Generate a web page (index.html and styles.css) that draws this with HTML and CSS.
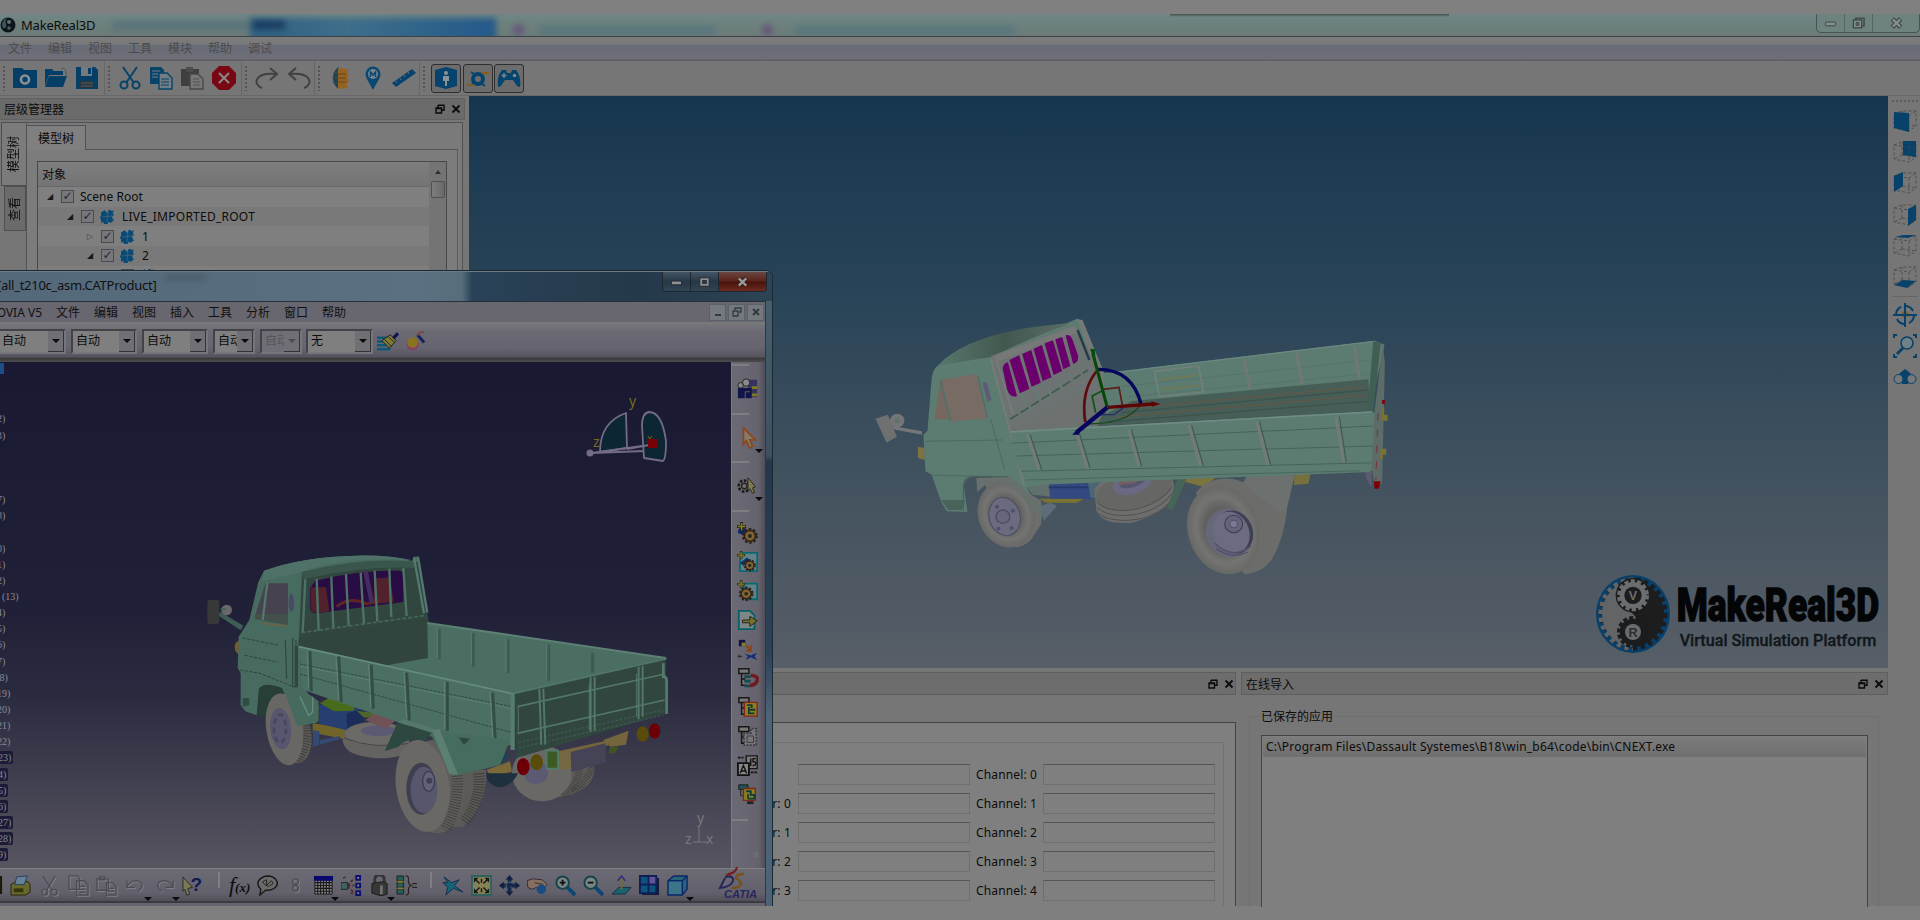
FILE: index.html
```html
<!DOCTYPE html>
<html lang="zh-CN">
<head>
<meta charset="utf-8">
<title>MakeReal3D</title>
<link rel="stylesheet" href="styles.css">
</head>
<body>
<svg class="defs" aria-hidden="true">
  <defs>
    <linearGradient id="sky" x1="0" y1="0" x2="0" y2="1"><stop offset="0" stop-color="#16364f"/><stop offset=".35" stop-color="#294458"/><stop offset=".7" stop-color="#44535f"/><stop offset="1" stop-color="#575e67"/></linearGradient>
    <linearGradient id="night" x1="0" y1="0" x2="0" y2="1"><stop offset="0" stop-color="#191933"/><stop offset=".5" stop-color="#202038"/><stop offset=".66" stop-color="#2b2b40"/><stop offset="1" stop-color="#575560"/></linearGradient>
    <radialGradient id="tyre"><stop offset=".5" stop-color="#60605f"/><stop offset=".75" stop-color="#747473"/><stop offset="1" stop-color="#686867"/></radialGradient>
    <linearGradient id="roof" x1="0" y1="0" x2="1" y2="0"><stop offset="0" stop-color="#57766c"/><stop offset=".5" stop-color="#42584f"/><stop offset="1" stop-color="#5c6c67"/></linearGradient>
    <symbol id="float" viewBox="0 0 10 10"><path d="M3 1.2h6v5H7M3 1v2.5M1 4h5.5v5H1zM1 4.6h5.5" fill="none" stroke="#0a0a0a" stroke-width="1.4"/></symbol>
    <symbol id="cross" viewBox="0 0 10 10"><path d="M1.5 1.5l7 7m0-7l-7 7" stroke="#0a0a0a" stroke-width="1.8"/></symbol>
    <symbol id="cube" viewBox="0 0 24 24"><path d="M1 5l8-3h14v15l-7 5-15-3zM1 5l15 2 7-5M16 7v15M9 2v13M9 15l-8 4M9 15l14 2" fill="none" stroke="#505050" stroke-width="1" stroke-dasharray="3 2"/></symbol>
    <symbol id="part" viewBox="0 0 14 14"><path d="M1 3l2-1 1-1 2 2 1 1 1-3 2 0 1 1 2-1-1 3 1 2-2 1 1 2 1 2-2 1-1 1-2-1-1 2-2 0-1 1-1-3-2 1 0-3-1-2 1-2z" fill="#084a77"/><path d="M2 7.500l10-1M7.500 2l-1 10" stroke="#4a6272" stroke-width=".8"/></symbol>
    <symbol id="gear" viewBox="0 0 24 24"><circle cx="13" cy="14" r="6.5" fill="none" stroke="#2c2520" stroke-width="3" stroke-dasharray="2.5 1.6"/><circle cx="13" cy="14" r="5.500" fill="#7c6530" stroke="#351f15" stroke-width="1.500"/><circle cx="13" cy="14" r="2" fill="#252525"/></symbol>
    <symbol id="spark" viewBox="0 0 10 10"><path d="M5 0v10M0 5h10" stroke="#24240c" stroke-width="3"/><path d="M5 1v8M1 5h8" stroke="#858025" stroke-width="1.6"/></symbol>
    <symbol id="treeic" viewBox="0 0 24 24"><path d="M2 2h11v5H2zM5 7v13h4M5 13h4" fill="#777" stroke="#171717" stroke-width="1.6"/></symbol>
  </defs>
</svg>

<div class="screen">
  <div class="top-strip"></div>

  <header class="titlebar">
    <svg class="app-icon" viewBox="0 0 16 16"><circle cx="8" cy="8" r="7.5" fill="#0b161c"/><path d="M7 1a7 7 0 0 0-4 10c2 1 4-1 3-4s0-4 1-6z" fill="#3f555e"/><circle cx="9" cy="5" r="2" fill="#5f6d70"/><circle cx="9" cy="11" r="1.8" fill="#4c5a5f"/></svg>
    <span class="app-name">MakeReal3D</span>
    <div class="glass"><i class="haze haze-text"></i><i class="haze haze-blue"></i><i class="haze haze-dark"></i><i class="haze haze-p1"></i><i class="haze haze-t1"></i><i class="haze haze-p2"></i><i class="haze haze-t2"></i><i class="shade"></i></div>
    <div class="win-btns">
      <span class="wb"><svg viewBox="0 0 14 12"><rect x="1.5" y="5" width="11" height="4" rx="1" fill="#85908f" stroke="#3b4444"/></svg></span>
      <span class="wb"><svg viewBox="0 0 14 12"><path d="M4 3V.8h9V9h-2" fill="none" stroke="#3b4444" stroke-width="1.4"/><rect x="1.5" y="2.8" width="9" height="8.4" fill="#85908f" stroke="#3b4444" stroke-width="1.4"/><rect x="4.5" y="5.5" width="3" height="3" fill="#657371" stroke="#3b4444"/></svg></span>
      <span class="wb wb-close"><svg viewBox="0 0 14 12"><path d="M2.500 1.500l9 9m0-9l-9 9" stroke="#3b4444" stroke-width="5"/><path d="M3 2l8 8m0-8l-8 8" stroke="#858e8d" stroke-width="2.600"/></svg></span>
    </div>
  </header>

  <nav class="menubar"><span>文件</span><span>编辑</span><span>视图</span><span>工具</span><span>模块</span><span>帮助</span><span>调试</span></nav>

  <div class="toolbar">
    <div class="tgroup g1">
      <svg viewBox="0 0 24 24"><path d="M0 2h9l2 2h13v18H0z" fill="#053f68"/><circle cx="12" cy="13.500" r="4" fill="none" stroke="#8a8f92" stroke-width="2.600"/></svg>
      <svg viewBox="0 0 24 24"><path d="M1 20V3h7l2 2h9v4H5z" fill="#053f68"/><path d="M5 10h18l-4 11H1z" fill="#053f68"/><path d="M17 3c4-2 5 1 5 6" fill="none" stroke="#3f5666"/></svg>
      <svg viewBox="0 0 24 24"><path d="M1 1h19l3 3v19H1z" fill="#053f68"/><path d="M6 1h11v9H6z" fill="#727b80"/><path d="M13 2h3v6h-3z" fill="#053f68"/><path d="M5 15h14v7H5z" fill="#27343c"/><path d="M6 17h12M6 20h12" stroke="#566069"/></svg>
    </div>
    <div class="tgroup g2">
      <svg viewBox="0 0 24 24" fill="none" stroke="#084369" stroke-width="2"><path d="M5 1l11 16M19 1L8 17"/><circle cx="6" cy="19" r="3.500"/><circle cx="18" cy="19" r="3.500"/></svg>
      <svg viewBox="0 0 24 24"><path d="M1 1h11l3 3v14H1z" fill="#084369"/><path d="M3 5h8M3 8h8M3 11h6" stroke="#747f87"/><path d="M10 7h8l5 5v11H10z" fill="#737d84" stroke="#084369" stroke-width="1.400"/><path d="M12 13h8M12 16h8M12 19h8" stroke="#084369"/></svg>
      <svg viewBox="0 0 24 24"><path d="M1 3h18v17H1z" fill="#3f3f3f"/><path d="M6 1h7v5H6z" fill="#4d4d4d"/><path d="M10 8h8l5 5v10H10z" fill="#777" stroke="#484848" stroke-width="1.400"/><path d="M13 13h6M13 16h7M13 19h7" stroke="#555"/></svg>
      <svg viewBox="0 0 24 24"><path d="M7 0h10l7 7v10l-7 7H7l-7-7V7z" fill="#780914"/><path d="M7 7l10 10m0-10L7 17" stroke="#898989" stroke-width="2"/></svg>
    </div>
    <div class="tgroup g3">
      <svg viewBox="0 0 24 24" fill="none" stroke="#414141" stroke-width="2"><path d="M7 22C-3 18 0 6 21 8M15 2l7 6-7 6"/></svg>
      <svg viewBox="0 0 24 24" fill="none" stroke="#414141" stroke-width="2"><path d="M17 22C27 18 24 6 3 8M9 2L2 8l7 6"/></svg>
    </div>
    <div class="tgroup g4">
      <svg viewBox="0 0 24 24"><path d="M9 1c-8 4-8 18 0 22z" fill="#154561"/><path d="M8 2l10 1-1 4 2 2-2 3 2 3-2 3 1 4-10 1z" fill="#946322"/><path d="M8 8h8M8 12h8M8 16h8M3 7h5M2 12h6M3 17h5" stroke="#644719"/></svg>
      <svg viewBox="0 0 24 24"><path d="M12 24C8 16 4.500 12 4.500 8a7.500 7.500 0 0 1 15 0c0 4-3.500 8-7.500 16z" fill="#084873"/><circle cx="12" cy="8" r="5" fill="#79858b"/><path d="M9.500 11V6l2.500 3 2.500-3v5" fill="none" stroke="#084873" stroke-width="1.500"/></svg>
      <svg viewBox="0 0 24 24"><path d="M0 17L20 3l4 4L4 21z" fill="#07446d"/><path d="M4 15l1 2m3-5l1 2m3-5l1 2m3-5l1 2" stroke="#62717b"/></svg>
    </div>
    <div class="tgroup g5">
      <span class="pressed"><svg viewBox="0 0 24 24"><path d="M1 4l11-3 11 3v16l-11 3-11-3z" fill="#07446d"/><circle cx="12" cy="7" r="2" fill="#8b9398"/><path d="M9 10h6v5h-2v5h-2v-5H9z" fill="#8b9398"/></svg></span>
      <span class="pressed"><svg viewBox="0 0 24 24"><circle cx="12" cy="13" r="5" fill="none" stroke="#07446d" stroke-width="4"/><path d="M5 6l3 2M19 20l-3-2M5 19l3-2" stroke="#07446d" stroke-width="2"/><path d="M16 7h7M1 19h7" stroke="#8a5b1e" stroke-width="2"/></svg></span>
      <span class="pressed"><svg viewBox="0 0 24 24"><path d="M5 4h4l1 3h4l1-3h4c4 5 5 11 4 17-4 0-5-5-7-7H8c-2 2-3 7-7 7C0 14 1 9 5 4z" fill="#07446d"/><path d="M7 7v5M4.500 9.500h5" stroke="#7d868c" stroke-width="1.500"/><circle cx="17.500" cy="9.500" r="1.800" fill="#7d868c"/></svg></span>
    </div>
  </div>

  <div class="workspace">
    <aside class="dock">
      <div class="dock-head"><span>层级管理器</span><svg class="hi"><use href="#float"/></svg><svg class="hi"><use href="#cross"/></svg></div>
      <div class="dock-body">
        <div class="vtabs"><span class="vtab on">模型树</span><span class="vtab">查看</span></div>
        <div class="tabpage">
          <div class="htab-row"><span class="htab">模型树</span><span class="htab-rest"></span></div>
          <div class="page">
            <div class="tree">
              <div class="tree-main">
                <div class="tree-head">对象</div>
                <div class="row r0"><i class="exp">◢</i><i class="chk">✓</i><span>Scene Root</span></div>
                <div class="row r1 alt"><i class="exp">◢</i><i class="chk">✓</i><svg class="pi"><use href="#part"/></svg><span class="wide">LIVE_IMPORTED_ROOT</span></div>
                <div class="row r2"><i class="exp dim">▷</i><i class="chk">✓</i><svg class="pi"><use href="#part"/></svg><span>1</span></div>
                <div class="row r2 alt"><i class="exp">◢</i><i class="chk">✓</i><svg class="pi"><use href="#part"/></svg><span>2</span></div>
                <div class="row r3"><i class="exp"></i><i class="chk"></i><svg class="pi"><use href="#part"/></svg></div>
              </div>
              <div class="scroll"><i class="up"></i><i class="thumb"></i></div>
            </div>
          </div>
        </div>
      </div>
    </aside>

    <main class="center">
      <svg class="view3d" viewBox="0 0 1419 572">
        <rect width="1419" height="572" fill="url(#sky)"/>
        <g transform="translate(391 204) scale(.3444 .3333)">
          <!-- mirror -->
          <path d="M95 378l85 16v10l-85-16z" fill="#74777a"/><path d="M45 356l36-12 26 66-30 18z" fill="#6f7171"/><circle cx="108" cy="362" r="21" fill="#747676"/><circle cx="108" cy="362" r="8" fill="#5f7272"/>
          <path d="M168 440l20 4v36l-20-6z" fill="#7c7340"/>
          <!-- spare wheel and chassis -->
          <path d="M520 596h130l-20 12h-90z" fill="#7a7330"/><path d="M470 540h90v50l-60-6z" fill="#61706d"/><path d="M548 548l120-6 30-12v66H552z" fill="#33497f"/><path d="M548 562h120" stroke="#24386b" stroke-width="5"/><path d="M608 520h70l-10 18h-58z" fill="#4f7023"/><path d="M660 540l30-20v74h-20z" fill="#4c6773"/>
          <path d="M680 570Q700 520 800 512Q910 500 912 560L905 590Q890 640 790 668Q700 676 686 630Z" fill="#6d6d6c"/><ellipse cx="795" cy="572" rx="114" ry="54" fill="#666665" transform="rotate(-14 795 572)"/><path d="M688 606c40 46 170 30 218-46M688 622c40 42 170 30 216-40M692 640c40 34 150 30 206-30" fill="none" stroke="#535353" stroke-width="3"/>
          <ellipse cx="790" cy="550" rx="58" ry="32" fill="#696984" transform="rotate(-16 790 550)"/><ellipse cx="790" cy="544" rx="40" ry="18" fill="#55556c" transform="rotate(-16 790 544)"/><path d="M690 512h220v12l-60 4-150-2z" fill="#626a68"/><path d="M760 522l60-2-20 30-50 6z" fill="#765d63"/>
          <path d="M915 518h140l-60 42-70-20z" fill="#7b743c"/><path d="M925 528l28-4-44 106-18-4z" fill="#476459"/>
          <!-- wheels -->
          <path d="M975 580c30-50 110-60 160-20l105 70q-10 90-45 150-30 40-80 42z" fill="#6c6c6a"/>
          <ellipse cx="1055" cy="690" rx="103" ry="135" fill="url(#tyre)" transform="rotate(-16 1055 690)"/>
          <ellipse cx="1073" cy="698" rx="68" ry="74" fill="#67677a" transform="rotate(-20 1073 698)"/><ellipse cx="1086" cy="696" rx="54" ry="66" fill="#3f3f52" transform="rotate(-20 1086 696)"/><ellipse cx="1078" cy="698" rx="52" ry="64" fill="#6b6b82" transform="rotate(-20 1078 698)"/><path d="M1030 730q50 50 104 10M1034 746q46 34 92 10" fill="none" stroke="#50506a" stroke-width="4"/><circle cx="1085" cy="672" r="26" fill="#64647c" stroke="#3c3c51" stroke-width="3"/><circle cx="1085" cy="672" r="11" fill="#7a7a92" stroke="#50506a" stroke-width="3"/>
          <path d="M1130 515h135l-28 122-30-8-95-80z" fill="#6c716f"/><path d="M1262 515h48l-8 36-42 4z" fill="#76703f"/>
          <path d="M360 548l70-6 96 60v70l-30 48q-20 20-44 22z" fill="#6e6e6d"/><ellipse cx="425" cy="644" rx="82" ry="100" fill="url(#tyre)" transform="rotate(-18 425 644)"/><ellipse cx="420" cy="650" rx="45" ry="58" fill="#6b6b80" stroke="#4c4c60" stroke-width="3" transform="rotate(-14 420 650)"/><circle cx="415" cy="650" r="20" fill="#66667d" stroke="#4c4c60" stroke-width="4"/><circle cx="398" cy="620" r="6" fill="#50506a"/><circle cx="444" cy="632" r="6" fill="#50506a"/><circle cx="402" cy="686" r="6" fill="#50506a"/><circle cx="440" cy="684" r="6" fill="#50506a"/>
          <path d="M522 618l30-10 20 10-38 44z" fill="#5d6c79"/>
          <!-- cab -->
          <path d="M208 235Q212 205 232 192Q300 110 600 70L630 56 646 62 724 254 684 400 470 440 530 556 484 560 520 640 440 548 380 530 322 532Q302 540 302 562L312 636 252 634 236 606 208 524 190 514 184 404 196 392Z" fill="#5c7b71"/>
          <path d="M338 534l100-4 90 90v40L440 552l-66-6-34 30z" fill="#66706c"/>
          <path d="M228 196Q320 90 612 70Q500 110 385 170Z" fill="url(#roof)"/>
          <path d="M380 168L625 76l100 190-50 110-240 20z" fill="#6d7372"/><path d="M392 166L625 78l4 20L402 184z" fill="#767978"/>
          <path d="M630 58l16 2 92 236-10 30z" fill="#747876"/><path d="M632 90l34 90" stroke="#243c49" stroke-width="7"/>
          <path d="M380 176l96 380M394 172l50 170" fill="none" stroke="#747c79" stroke-width="6"/>
          <g fill="#6a006c"><path d="M414 204q6-18 16-16l26 100q-22 8-30-24z"/><path d="M434 180l28-14 30 100-28 14z"/><path d="M471 162l26-12 28 98-27 12z"/><path d="M504 146l24-11 28 97-26 11z"/><path d="M536 130l24-9 27 92-25 12z"/><path d="M567 118l20-7 24 87-21 10z"/><path d="M597 106q12-4 19 10l17 50q4 20-14 26z"/></g>
          <path d="M436 358L662 210" stroke="#3b5d4d" stroke-width="5" stroke-dasharray="28 8"/><path d="M470 282l14 34m22-50l16 34m18-48l16 32m18-50l16 34m18-48l16 32" stroke="#637e75" stroke-width="4"/>
          <path d="M216 358l18-118 24 118z" fill="#77685f"/><path d="M234 240l104-18 30 134-106 8z" fill="#786b63"/><path d="M234 240l28 122M342 226l28 128" stroke="#507068" stroke-width="5"/>
          <path d="M356 248l12-2 14 54-12 6z" fill="#5d5b76"/><path d="M190 424l225-4M210 526l210 4M380 360l40 150" fill="none" stroke="#4c6b61" stroke-width="3"/>
          <path d="M300 632v-70q0-32 30-32h100" fill="none" stroke="#445f57" stroke-width="3"/><path d="M236 600h70l-10 30h-40z" fill="#48645a"/>
          <!-- cargo bed -->
          <path d="M706 220L1495 122l28 12-38 180-770 60z" fill="#5c7b71"/>
          <path d="M640 380L790 303 1476 238l6 96z" fill="#465e57"/><path d="M434 394L640 268 716 310 690 378z" fill="#6d7271"/>
          <path d="M780 325L1465 260M740 352L1465 286" stroke="#6a5543" stroke-width="3"/><path d="M760 338L1475 270M720 366L1475 304" stroke="#3e524c" stroke-width="4"/>
          <path d="M745 217L1495 124" stroke="#6d8880" stroke-width="4"/><path d="M760 260L1480 180M780 290L1470 222" stroke="#52716a" stroke-width="2"/>
          <path d="M1490 124l22 4-22 210-16-8z" fill="#405e52"/>
          <path d="M436 394L1486 334l18 10 6 150-30 22L490 556 452 480z" fill="#5c7c72"/>
          <path d="M436 396L1486 336" stroke="#708c83" stroke-width="5"/><path d="M440 430L1490 378M455 468L1490 438M470 514L1500 488" stroke="#466359" stroke-width="3"/>
          <path d="M480 540L1450 512" stroke="#4a675d" stroke-width="3"/>
          <g stroke="#737b78" stroke-width="9"><path d="M486 404l34 106M628 396l32 108M780 388l30 112M955 376l34 122M1152 364l32 130M1382 350l22 138"/></g>
          <g stroke="#3f564f" stroke-width="3"><path d="M494 404l34 106M636 396l32 108M788 388l30 112M963 376l34 122M1160 364l32 130M1392 350l20 138"/></g>
          <path d="M1115 178l18 88M1268 160l16 92M1436 140l14 96" stroke="#727876" stroke-width="8"/>
          <path d="M855 214l128-16 14 78-128 14z" fill="none" stroke="#71807b" stroke-width="5"/><path d="M872 238l108-12M876 268l108-12" stroke="#77794b" stroke-width="4"/>
          <path d="M1494 334l24-204 6 60-8 360-20 14-10-60z" fill="#5d6c68"/><path d="M1504 340l-6 200" stroke="#76333a" stroke-width="3" stroke-dasharray="22 26"/>
          <path d="M1492 544h20l-6 22h-12z" fill="#7b0006"/><path d="M1516 300h8v12h-8z" fill="#850008"/><path d="M1514 322h8v22h10v18h-16zM1512 446h16v18h-10v12h-8z" fill="#7a7230"/><path d="M1466 516h20v46q-16-16-20-46z" fill="#5b5a72"/>
          <!-- manipulator -->
          <path d="M690 210Q640 270 654 366" fill="none" stroke="#5e0b0c" stroke-width="8"/><path d="M688 208Q790 206 816 312" fill="none" stroke="#06065c" stroke-width="10"/>
          <path d="M655 372Q780 372 816 312" fill="none" stroke="#164a19" stroke-width="4"/>
          <path d="M706 268l46-6 10 54" fill="none" stroke="#5d1d18" stroke-width="5"/><path d="M684 338l-10-50 34-18" fill="none" stroke="#0b5515" stroke-width="5"/><path d="M694 344h44l26-20" fill="none" stroke="#25256b" stroke-width="3"/>
          <path d="M718 322L676 160" stroke="#06480a" stroke-width="9"/><path d="M668 146l14 2 2 44z" fill="#064f0b"/>
          <path d="M720 322L850 312" stroke="#5c0608" stroke-width="10"/><path d="M846 304l26 8-24 8z" fill="#5c0608"/>
          <path d="M718 322L628 398" stroke="#06065c" stroke-width="13"/><path d="M636 384l-20 20 20 0z" fill="#06065c"/>
        </g>
        <g transform="translate(1091 454) scale(.3333)">
          <ellipse cx="219" cy="192" rx="111" ry="117" fill="#07406a"/>
          <ellipse cx="219" cy="192" rx="97" ry="103" fill="none" stroke="#1d1d1e" stroke-width="14" stroke-dasharray="13 11"/>
          <ellipse cx="219" cy="192" rx="93" ry="98" fill="#1d1d1e"/>
          <path d="M219 94A93 98 0 0 0 219 290Q270 240 219 192Q160 140 219 94z" fill="#626466"/><path d="M219 89A97 103 0 0 0 219 295" fill="none" stroke="#626466" stroke-width="14" stroke-dasharray="13 11"/>
          <circle cx="219" cy="136" r="52" fill="#1b1c1d"/><circle cx="219" cy="136" r="42" fill="none" stroke="#6b6d6f" stroke-width="12" stroke-dasharray="12 7"/><circle cx="219" cy="136" r="40" fill="#6b6d6f"/><circle cx="219" cy="136" r="26" fill="#1c1c1d"/><text x="219" y="150" class="gear-letter" fill="#6b6d6f">V</text>
          <circle cx="219" cy="246" r="43" fill="none" stroke="#1b1c1d" stroke-width="10" stroke-dasharray="12 7"/><circle cx="219" cy="246" r="40" fill="#1b1c1d"/><circle cx="219" cy="246" r="24" fill="#696b6d"/><text x="219" y="260" class="gear-letter" fill="#2c2d2e">R</text>
          <text x="350" y="213" class="brand" textLength="608" lengthAdjust="spacingAndGlyphs">MakeReal3D</text>
          <text x="359" y="289" class="brand-sub" textLength="590" lengthAdjust="spacingAndGlyphs">Virtual Simulation Platform</text>
        </g>
      </svg>

      <div class="bottom">
        <section class="bdock left">
          <div class="bhead"><span></span><svg class="hi"><use href="#float"/></svg><svg class="hi"><use href="#cross"/></svg></div>
          <div class="lpage"><div class="lgroup">
            <span class="lab"></span><i class="field"></i><span class="lab">Channel: 0</span><i class="field"></i>
            <span class="lab">r: 0</span><i class="field"></i><span class="lab">Channel: 1</span><i class="field"></i>
            <span class="lab">r: 1</span><i class="field"></i><span class="lab">Channel: 2</span><i class="field"></i>
            <span class="lab">r: 2</span><i class="field"></i><span class="lab">Channel: 3</span><i class="field"></i>
            <span class="lab">r: 3</span><i class="field"></i><span class="lab">Channel: 4</span><i class="field"></i>
          </div></div>
        </section>
        <section class="bdock right">
          <div class="bhead"><span>在线导入</span><svg class="hi"><use href="#float"/></svg><svg class="hi"><use href="#cross"/></svg></div>
          <div class="rgroup">
            <div class="legend"><span>已保存的应用</span></div>
            <div class="listbox"><div class="item">C:\Program Files\Dassault Systemes\B18\win_b64\code\bin\CNEXT.exe</div></div>
          </div>
        </section>
      </div>
    </main>

    <div class="side">
      <i class="grip"></i>
      <svg viewBox="0 0 24 24"><use href="#cube"/><path d="M1 3l15 1v19L1 19z" fill="#084169"/></svg>
      <svg viewBox="0 0 24 24"><use href="#cube"/><path d="M10 1h13v16l-13-2z" fill="#084169"/><path d="M16 3v11M12 7h10" stroke="#24465c"/></svg>
      <svg viewBox="0 0 24 24"><use href="#cube"/><path d="M1 5l9-4v14l-9 6z" fill="#084169"/></svg>
      <svg viewBox="0 0 24 24"><use href="#cube"/><path d="M15 6l8-4v15l-8 6z" fill="#084169"/></svg>
      <svg viewBox="0 0 24 24"><use href="#cube"/><path d="M2 3l8-2h13l-8 3z" fill="#084169"/></svg>
      <svg viewBox="0 0 24 24"><use href="#cube"/><path d="M1 20l9-5 13 1-9 7z" fill="#084169"/></svg>
      <i class="hr"></i>
      <svg viewBox="0 0 24 24"><path d="M7 12l5-5 5 5-5 3z" fill="#865921"/><path d="M12 0v24M0 12h24" stroke="#084169" stroke-width="2"/><circle cx="12" cy="12" r="9" fill="none" stroke="#084169" stroke-width="2" stroke-dasharray="10 4"/></svg>
      <svg viewBox="0 0 24 24"><circle cx="14" cy="9" r="6" fill="#728088" stroke="#084169" stroke-width="1.600"/><path d="M10 14l-6 6" stroke="#084169" stroke-width="3"/><path d="M1 4V1h3M20 1h3v3M1 20v3h3M20 23h3v-3" fill="none" stroke="#084169" stroke-width="2"/></svg>
      <svg viewBox="0 0 24 24"><path d="M8 6l4-3 4 3 3 3-4 9H9L5 9z" fill="#084169"/><circle cx="5.500" cy="13" r="4.500" fill="#75797c" stroke="#084169"/><circle cx="18.500" cy="13" r="4.500" fill="#75797c" stroke="#084169"/></svg>
    </div>
  </div>
  <div class="bottom-strip"></div>

  <section class="catia">
    <div class="ctitle"><span class="ctitle-text">[all_t210c_asm.CATProduct]</span><i class="haze smudge"></i>
      <div class="cbtns"><span><svg viewBox="0 0 14 12"><rect x="1.500" y="5" width="11" height="4" fill="#909090" stroke="#222b34"/></svg></span><span><svg viewBox="0 0 14 12"><rect x="2" y="1.500" width="10" height="9" fill="#909090" stroke="#222b34"/><rect x="5" y="4.500" width="4" height="3" fill="#303e4c" stroke="#222b34"/></svg></span><span class="red"><svg viewBox="0 0 14 12"><path d="M3 2l8 8m0-8l-8 8" stroke="#351815" stroke-width="4.500"/><path d="M3 2l8 8m0-8l-8 8" stroke="#999" stroke-width="2.600"/></svg></span></div>
    </div>
    <div class="cframe">
      <div class="cmenu"><span class="env">OVIA V5</span><span>文件</span><span>编辑</span><span>视图</span><span>插入</span><span>工具</span><span>分析</span><span>窗口</span><span>帮助</span>
        <div class="mdi"><i><svg viewBox="0 0 10 10"><path d="M2 8h6" stroke="#303a43" stroke-width="2"/></svg></i><i><svg viewBox="0 0 10 10"><path d="M3 3V1h6v4H7M1 4h5v5H1z" fill="none" stroke="#303a43" stroke-width="1.300"/></svg></i><i><svg viewBox="0 0 10 10"><path d="M2 2l6 6m0-6L2 8" stroke="#303a43" stroke-width="2"/></svg></i></div>
      </div>
      <div class="ccombos">
        <span class="combo first"><b>自动</b><i></i></span><span class="combo"><b>自动</b><i></i></span><span class="combo"><b>自动</b><i></i></span><span class="combo small"><b>自动</b><i></i></span><span class="combo small off"><b>自动</b><i></i></span><span class="combo none"><b>无</b><i></i></span>
        <svg class="ci" viewBox="0 0 24 22"><path d="M0 7h12M0 11h11M0 15h12M0 19h14" stroke="#0b5977" stroke-width="2.600"/><path d="M5 10l9-6 6 6-7 8z" fill="#7c7a33" stroke="#201f20"/><path d="M8 9l7 7M12 6l6 6" stroke="#252525"/><path d="M16 6l5-5 2 3-5 5z" fill="#111358"/></svg>
        <svg class="ci" viewBox="0 0 24 22"><circle cx="8" cy="14" r="6.500" fill="#854067"/><circle cx="8" cy="12" r="5.500" fill="#8a7420"/><path d="M13 4l7 8" stroke="#15225a" stroke-width="3"/><path d="M13 5c1-5 4-3 7-4" fill="none" stroke="#7d4545" stroke-width="2"/></svg>
      </div>
      <div class="cbody">
        <div class="cview">
          <svg viewBox="0 0 731 506">
            <rect width="731" height="506" fill="url(#night)"/>
            <g transform="translate(190 178) scale(.3333)">
              <path d="M90 215l70 42-8 14-66-44z" fill="#3f5d54"/><rect x="52" y="180" width="36" height="72" rx="8" fill="#373838"/><circle cx="110" cy="210" r="16" fill="#696969"/><path d="M92 208h16" stroke="#3e6756" stroke-width="6"/>
              <path d="M150 302v40q-16-2-16-22 0-16 16-18z" fill="#795c22"/>
              <!-- undercarriage -->
              <path d="M368 550l100 14v34l-100-20z" fill="#716429"/><path d="M388 495l66-8 64 24v40l-48 20-82-20z" fill="#273e70"/><path d="M470 520l52-14v40l-50 22z" fill="#1b2c58"/><path d="M390 490l26-16 80 16-4 22-60 2z" fill="#486c1c"/><path d="M370 570l18 4v40l-20 8zM390 600l60-12v10l-60 16z" fill="#354a73"/><path d="M500 512l60 8v14l-40-2z" fill="#4d642a"/>
              <path d="M458 596q0-46 90-50 90 0 110 44v50q-70 24-130 10-70-10-70-54z" fill="#656361"/><ellipse cx="558" cy="582" rx="92" ry="34" fill="#6c6a67"/><ellipse cx="565" cy="572" rx="52" ry="16" fill="#5b5974"/><path d="M462 594q90 36 196 16" fill="none" stroke="#474644" stroke-width="3"/><path d="M526 540l36-24 54 26-30 24z" fill="#705155"/>
              <!-- far rear wheel -->
              <path d="M1090 660l124 20q0 60-70 84l-70 14z" fill="#5c5a57"/><ellipse cx="1056" cy="700" rx="90" ry="84" fill="#696864"/><ellipse cx="1038" cy="698" rx="36" ry="34" fill="#5c5a73"/>
              <path d="M1120 770q44-30 52-98M1150 756q40-30 56-76" fill="none" stroke="#454443" stroke-width="22" stroke-dasharray="3 4"/>
              <!-- front wheel -->
              <ellipse cx="325" cy="596" rx="40" ry="74" fill="#5c5b59"/><path d="M346 524q24 66-24 144" fill="none" stroke="#403f3e" stroke-width="26" stroke-dasharray="3 5"/><ellipse cx="283" cy="566" rx="54" ry="111" fill="#696764" transform="rotate(-9 283 566)"/><ellipse cx="272" cy="566" rx="31" ry="62" fill="#57566e" transform="rotate(-6 272 566)"/><ellipse cx="270" cy="566" rx="18" ry="42" fill="none" stroke="#45455c" stroke-width="8" stroke-dasharray="16 12"/>
              <!-- cab -->
              <path d="M222 92Q340 50 500 47Q600 45 666 63L672 50 684 50 714 240 330 330 346 450 386 500 380 548 322 558 286 462Q250 425 208 444L200 526 166 514 152 496 152 400 143 384 146 290 178 240 205 126Z" fill="#486b60"/>
              <path d="M222 92Q340 50 500 47q100-2 166 14-200-14-336 36l-112 26z" fill="#4f7268"/><path d="M204 524L206 450Q216 422 276 444L284 462Q238 450 226 530Z" fill="#283f38"/>
              <path d="M226 130h68v112l-100-10z" fill="#46424e"/><path d="M196 222h98v34l-98-18z" fill="#44504b"/><path d="M216 250l76 8" stroke="#7c6136" stroke-width="3"/><path d="M232 128l-14 112" stroke="#54776d" stroke-width="7"/>
              <path d="M336 96Q520 58 690 66l26 186v110l-56 4-334-50z" fill="#31463f"/><path d="M336 96Q520 50 674 66l-2 18Q520 76 340 118z" fill="#3a564c"/>
              <path d="M376 122Q510 90 628 92q12 0 12 14v80L380 220q-20 0-20-20v-56z" fill="#2a0c44"/><path d="M362 142h46l10 72-42 4q-14 0-14-20zM552 116l46-4 14 74-60 6z" fill="#51222b"/><path d="M440 200q40-32 90-8l40-10" fill="none" stroke="#5e2524" stroke-width="9"/><path d="M526 92l20 96" stroke="#442c5f" stroke-width="14"/>
              <path d="M346 118l-8 160M380 116l6 156M424 110l6 154M468 102l8 156M512 98l10 154M554 92l8 152M598 86l6 146M640 84l10 144" stroke="#4d7367" stroke-width="7"/>
              <path d="M672 52l30 168M684 50l28 168" stroke="#54796e" stroke-width="7"/><path d="M334 278L710 226" stroke="#46675c" stroke-width="5" stroke-dasharray="12 6"/>
              <path d="M158 294l110 22M150 390l60 10 100 40M164 346l100 20" fill="none" stroke="#2e453e" stroke-width="3" stroke-dasharray="10 4"/><path d="M286 300l4 116M308 294v146h10V300" fill="none" stroke="#314b43" stroke-width="4"/>
              <ellipse cx="304" cy="188" rx="8" ry="28" fill="#4a4a67"/><path d="M158 474h20v22l-20 4z" fill="#314c43"/>
              <!-- bed interior -->
              <path d="M326 296L716 232v122l-100 20-60 30-230-82z" fill="#31453e"/>
              <path d="M712 248L1428 354 970 462 590 376l124-22z" fill="#4b6e62"/><path d="M712 249L1428 354" stroke="#5c8074" stroke-width="6"/>
              <path d="M748 266v92M850 280v100M954 298v102M1076 314v108M1208 338v60" stroke="#3d5b51" stroke-width="9"/><path d="M742 264v90M844 278v96M948 296v100M1070 314v104" stroke="#5a7d72" stroke-width="3"/>
              <!-- near side -->
              <path d="M326 318L972 460v152q-40 10-62 16L630 548l-290-98z" fill="#4c6f63"/>
              <path d="M326 320L972 462" stroke="#648b7e" stroke-width="5"/><path d="M330 372L966 500M330 402L966 578" stroke="#304b42" stroke-width="3" stroke-dasharray="9 3"/><path d="M330 378L966 506" stroke="#5b7e73" stroke-width="3"/>
              <path d="M360 334l4 120M446 350l8 136M544 374l6 132M650 398l8 144M772 426v146M908 458l8 140" stroke="#334e44" stroke-width="9"/><path d="M352 332l4 112M438 348l8 130M536 372l6 130M642 396l8 140M764 424v144M900 456l8 138" stroke="#618377" stroke-width="3"/>
              <path d="M326 440l60 44v60l-64 12-36-96z" fill="#466b5e"/><path d="M330 470l26 56 12-10V470" fill="none" stroke="#638c7d" stroke-width="4"/>
              <path d="M314 318h10v124h-10z" fill="#2f473f"/>
              <!-- tailgate -->
              <path d="M972 460L1428 356v164L980 654z" fill="#30463f"/><path d="M972 460L1430 356M982 500L1424 402M982 580L1424 480" stroke="#52776a" stroke-width="5"/><path d="M985 608L1420 510M985 624L1420 526" stroke="#4a6c60" stroke-width="2" stroke-dasharray="8 5"/>
              <path d="M1048 446l6 168M1060 446l6 168M1202 412v164M1214 410v162M1346 380v158M1358 378v152" stroke="#527669" stroke-width="6"/><path d="M968 464v166" stroke="#557c6e" stroke-width="13"/><path d="M1420 370v40q10 0 10 12v100" fill="none" stroke="#547c6e" stroke-width="8"/><path d="M985 500v75M1198 430v140M1340 400v130" stroke="#67897d" stroke-width="2"/>
              <!-- rear details -->
              <path d="M890 690l70-26 6 30-60 20z" fill="#7b6939"/><path d="M888 700h96q-18 40-60 42-36-10-36-42z" fill="#1d303c"/><path d="M900 622l60 22-26 30z" fill="#233f54"/>
              <path d="M1110 632l150-32v14l-150 40zM1240 600l76-28-8 42-46 6z" fill="#75653c"/><path d="M1110 638h36v50h-36z" fill="#756943"/><path d="M1142 636l104-26 2 56-104 30z" fill="#454457"/><path d="M1260 620h26l-10 20h-20z" fill="#405522"/><path d="M1070 632h34v54h-34z" fill="#3d5a24" stroke="#4f7c6b" stroke-width="5"/>
              <ellipse cx="1000" cy="680" rx="19" ry="26" fill="#6d0006"/><ellipse cx="1040" cy="667" rx="19" ry="24" fill="#594b0a"/><ellipse cx="1358" cy="582" rx="18" ry="23" fill="#594b0a"/><ellipse cx="1394" cy="573" rx="17" ry="23" fill="#6d0006"/>
              <!-- rear wheel -->
              <path d="M780 680l108 10q8 100-70 170h-60z" fill="#5b5a57"/><path d="M866 700q10 80-44 150" fill="none" stroke="#403f3e" stroke-width="34" stroke-dasharray="3 5"/><ellipse cx="735" cy="740" rx="87" ry="140" fill="#5e5d5a" transform="rotate(-5 735 740)"/><path d="M790 660q34 100-24 210" fill="none" stroke="#444342" stroke-width="34" stroke-dasharray="3 5"/><ellipse cx="698" cy="738" rx="80" ry="139" fill="#696864" transform="rotate(-8 698 738)"/>
              <ellipse cx="694" cy="746" rx="45" ry="78" fill="#403f52"/><ellipse cx="702" cy="750" rx="40" ry="70" fill="#57566d"/><ellipse cx="716" cy="724" rx="18" ry="30" fill="#626179" stroke="#3b3a50" stroke-width="4"/><circle cx="718" cy="722" r="9" fill="#3f3e56"/>
              <path d="M616 560L640 546 736 572 960 600 930 676 800 706 786 706 726 590 626 566Z" fill="#466c5f"/><path d="M584 634l38-86 106 26-20 28q-60-12-82 18z" fill="#2d4840"/><path d="M622 546l20-8 96 30-12 10z" fill="#54796c"/><path d="M726 572l22-6 56 138-26-2z" fill="#5b8072"/><path d="M806 592l34 4-18 18z" fill="#2d483f"/>
            </g>
            <!-- compass -->
            <g transform="translate(0 -204)"><g fill="#0d2633" stroke="#746b86" stroke-width="1.800" stroke-linejoin="round"><path d="M600 294q0-30 26-39l1 35-27 4zM642 268q0-13 7-14 13 0 17 29 0 18-3 20l-19-3z"/><path d="M592 295l50-7M592 295l52-2M627 291l22-4" fill="none"/></g><circle cx="590" cy="295" r="3.500" fill="#746b86"/><g class="axis yellow"><text x="629" y="248">y</text><text x="593" y="289">z</text><text x="647" y="284" class="tiny">x</text></g><rect x="648" y="281" width="9" height="9" fill="#780006"/></g>
            <g class="axis grey"><text x="697" y="461">y</text><text x="685" y="482">z</text><text x="706" y="482">x</text></g><path d="M699 464v16h8M699 480h-6" fill="none" stroke="#78777f"/>
          </svg>
          <ul class="ctree"><li><i class="sel"></i></li><li></li><li></li><li>2)</li><li>3)</li><li></li><li></li><li></li><li>7)</li><li>8)</li><li></li><li>0)</li><li>1)</li><li>2)</li><li>. (13)</li><li>4)</li><li>5)</li><li>6)</li><li>7)</li><li>.8)</li><li>19)</li><li>20)</li><li>21)</li><li>22)</li><li><b>23)</b></li><li><b>4)</b></li><li><b>5)</b></li><li><b>6)</b></li><li><b>27)</b></li><li><b>28)</b></li><li><b>9)</b></li></ul>
        </div>
        <div class="cside">
          <div class="cs lone"><svg viewBox="0 0 24 24"><path d="M12 2h10v19H12z" fill="#363260"/><path d="M16 9h6v3h-6zM16 17h6v3h-6z" fill="#817b20"/><path d="M1 11h15v11H1z" fill="#11154d"/><circle cx="4" cy="8" r="3" fill="#898989" stroke="#222"/><circle cx="10" cy="5" r="4" fill="#898989" stroke="#222"/><path d="M9 23V15h5" fill="none" stroke="#6d6b24"/></svg></div>
          <div class="cs lone drop"><svg viewBox="0 0 24 24"><path d="M7 1l13 13h-6l3 7-3 2-4-8-3 4z" fill="#857a70" stroke="#8c481b" stroke-width="2"/></svg></div>
          <div class="cs lone drop"><svg viewBox="0 0 24 24"><circle cx="8" cy="12" r="6" fill="#707070" stroke="#1e1e1e" stroke-width="3" stroke-dasharray="3 1.500"/><circle cx="8" cy="12" r="3" fill="none" stroke="#222" stroke-width="1.500"/><path d="M12 3l8 10-3 1 2 5-2 1-3-5-2 2z" fill="#7f7c50" stroke="#222"/></svg></div>
          <div class="cs stack">
            <svg viewBox="0 0 24 24"><path d="M1 12q0-6 6-7l4 4-5 5z" fill="#10266b"/><use href="#spark" x="0" y="0" width="10" height="10"/><use href="#gear" x="0" y="0" width="26" height="26"/></svg>
            <svg viewBox="0 0 24 24"><path d="M4 2h18v20H3z" fill="#648088" stroke="#086a70" stroke-width="2"/><path d="M3 13l8-6 4 4-8 5z" fill="#12316b"/><use href="#spark" x="0" y="0" width="9" height="9"/><use href="#gear" x="3" y="4" width="20" height="20"/></svg>
            <svg viewBox="0 0 24 24"><path d="M7 4h15v17H10z" fill="#648088" stroke="#086a70" stroke-width="2"/><use href="#gear" x="-3" y="1" width="24" height="24"/><use href="#spark" x="0" y="0" width="9" height="9"/></svg>
            <svg viewBox="0 0 24 24"><path d="M2 2h12l5 5v15H2z" fill="#7d8788" stroke="#076066" stroke-width="2"/><path d="M6 12h8V8l8 5-8 6v-4H6z" fill="#77712a" stroke="#1c1c1c"/></svg>
            <svg viewBox="0 0 24 24"><path d="M2 2h7v7H2z" fill="#141145"/><path d="M5 5h4v4H5z" fill="#807c32"/><path d="M10 8l4 5m1-5v6h-5" fill="none" stroke="#854516" stroke-width="2"/><path d="M8 17l7 2 7-3-3 4 3 4-7-3-6 3 3-4z" fill="#102a78"/><path d="M6 20H1m2-2l-2 2 2 2" fill="none" stroke="#202020"/></svg>
            <svg viewBox="0 0 24 24"><use href="#treeic"/><path d="M8 9h7v3H8zm0 5h7v3H8zm0 5h7v3H8z" fill="#164b4f"/><path d="M15 9q9 1 7 6t-8 5" fill="none" stroke="#701a22" stroke-width="4"/></svg>
            <svg viewBox="0 0 24 24"><use href="#treeic"/><path d="M8 7h14v15H8z" fill="#8b801c" stroke="#83251c" stroke-width="1.500"/><path d="M11 10h5v3M13 12v7h6M14 15h6" fill="none" stroke="#103b3c" stroke-width="2"/></svg>
            <svg viewBox="0 0 24 24"><use href="#treeic"/><path d="M7 9h8V4h6v18H8z" fill="#75757a" stroke="#3a3a3e" stroke-width="2" stroke-dasharray="2 1.500"/><path d="M11 12h7v7h-7z" fill="none" stroke="#3a3a3e"/></svg>
            <svg viewBox="0 0 24 24"><path d="M10 2h12v14H10z" fill="#777" stroke="#171717" stroke-width="1.500"/><path d="M1 10h12v13H1z" fill="#858585" stroke="#111" stroke-width="2"/><path d="M3.500 21L7 12.500 10.500 21M5 18.500h4M15 5v8M20.500 5H17.500v3.500q3.500-.5 3 2t-3.500 2" fill="none" stroke="#111" stroke-width="1.500"/><path d="M1 4h6M15 20h7" stroke="#111" stroke-width="2" stroke-dasharray="3 1"/></svg>
            <svg viewBox="0 0 24 24"><path d="M2 2h10v5H2z" fill="#19575c" stroke="#171717"/><path d="M4 7v7h4" fill="none" stroke="#222"/><path d="M7 6h13v13H7z" fill="#8b801c" stroke="#83251c" stroke-width="1.500"/><path d="M10 9h5v4h4v4h-7M12 12v5" fill="none" stroke="#103b3c" stroke-width="2"/><path d="M11 20h7v3h-7z" fill="#1e2424"/></svg>
          </div>
          <i class="cgrip"></i><span class="more">»</span>
        </div>
      </div>
      <div class="cbottom">
        <div class="cb b1">
          <span><svg viewBox="0 0 22 22"><path d="M2 2h18v17H2z" fill="#555011" stroke="#181807" stroke-width="2"/></svg></span>
          <span><svg viewBox="0 0 22 22"><path d="M1 10l5-3h13l2 3v8l-5 3H1z" fill="#68682a" stroke="#24240d"/><path d="M7 2l11-1-3 9H5z" fill="#658396" stroke="#273e62"/><path d="M4 14h10v4H4z" fill="#34350c"/></svg></span>
          <span class="gray"><svg viewBox="0 0 22 22"><path d="M4 1l10 15M17 1L8 16"/><circle cx="6" cy="18" r="3"/><circle cx="16" cy="18" r="3"/></svg></span>
          <span class="gray"><svg viewBox="0 0 22 22"><path d="M1 1h9l2 3v11H1zM9 6h8l4 4v11H9zM12 12h6M12 15h6M12 18h6"/></svg></span>
          <span class="gray"><svg viewBox="0 0 22 22"><path d="M1 4h12v12H1zM4 2h5v3H4zM11 8h6l4 4v9H11zM13 14h6M13 17h6"/></svg></span>
          <span class="gray d"><svg viewBox="0 0 22 22"><path d="M2 6v7h8M2 12C8 2 22 6 17 14l-3 3"/></svg></span>
          <span class="gray d"><svg viewBox="0 0 22 22"><path d="M20 6v7h-8M20 12C14 2 0 6 5 14l3 3"/></svg></span>
          <span><svg viewBox="0 0 22 22"><path d="M1 2l10 11-5 1 2 6-3 1-2-6-2 2z" fill="#7d7a53" stroke="#292929"/><text x="9" y="17" class="qm">?</text></svg></span>
        </div>
        <i class="vsep"></i>
        <div class="cb b2">
          <span class="fx">f<small>(x)</small></span>
          <span><svg viewBox="0 0 22 22"><path d="M4 15C-3 8 3 2 11 1c9 0 13 8 8 12-3 3-7 3-10 3l-6 5z" fill="#6b6b6b" stroke="#191919" stroke-width="1.500"/><path d="M6 7l4-2v6l5-5 2 3-5 3-4-2z" fill="none" stroke="#252525"/></svg></span>
          <span class="gray"><svg viewBox="0 0 22 22"><circle cx="11" cy="7" r="3"/><circle cx="11" cy="14" r="3"/></svg></span>
          <span class="d"><svg viewBox="0 0 22 22"><path d="M2 5h18v15H2z" fill="#878787" stroke="#191919"/><path d="M5 5v15M8 5v15M11 5v15M14 5v15M17 5v15M2 8h18M2 11h18M2 14h18M2 17h18" stroke="#1a1a1a" stroke-width="1.200"/><path d="M1 1h20v5H1z" fill="#08086e"/></svg></span>
          <span><svg viewBox="0 0 22 22"><path d="M0 8h7v7H0z" fill="#3d6663" stroke="#242424"/><path d="M7 11l7-8M7 11h7M7 12l7 7M2 3l4-1M10 19h3" stroke="#4e2222" stroke-width="1.500" stroke-dasharray="3 2"/><path d="M16 1h4v4h-4zM16 9h4v4h-4zM16 17h4v4h-4z" fill="#88888d" stroke="#0e0e70" stroke-width="2"/></svg></span>
          <span class="d"><svg viewBox="0 0 22 22"><path d="M6 10V5q0-5 5-5t5 5v5" fill="none" stroke="#343434" stroke-width="3"/><path d="M3 9l11-2 5 2v11l-6 2-10-3z" fill="#373737" stroke="#1b1b1b"/><path d="M13 11v9" stroke="#707070" stroke-width="3"/></svg></span>
          <span><svg viewBox="0 0 22 22"><path d="M1 1h7v5H1zM1 8h7v5H1zM1 15h7v5H1z" fill="#225e56" stroke="#222"/><path d="M2 7h5M2 14h5" stroke="#848129" stroke-width="2"/><path d="M10 1q4 0 3 5 0 4 3 5-3 1-3 5 1 5-3 5M17 9h5M17 13h5" fill="none" stroke="#252525" stroke-width="1.300"/></svg></span>
        </div>
        <i class="vsep"></i>
        <div class="cb b3">
          <span><svg viewBox="0 0 22 22"><path d="M2 2l8 6 8-3-5 6 9 7-10-4-8 7 2-8-5-5 5 0z" fill="#186276" stroke="#192c49"/></svg></span>
          <span><svg viewBox="0 0 22 22"><path d="M1 1h20v20H1z" fill="#868255" stroke="#2d6260" stroke-width="2"/><path d="M9 9L5 5m8 4l4-4M9 13l-4 4m8-4l4 4M11 4v4m0 6v4" fill="none" stroke="#181818" stroke-width="1.500"/><path d="M3 3h5L3 8zM19 3h-5l5 5zM3 19h5l-5-5zM19 19h-5l5-5z" fill="#181818"/></svg></span>
          <span><svg viewBox="0 0 22 22"><path d="M11 3v16M3 11h16" stroke="#132a4d" stroke-width="4" stroke-dasharray="4 1"/><path d="M7 5l4-5 4 5zM7 17l4 5 4-5zM5 7l-5 4 5 4zM17 7l5 4-5 4z" fill="#101f42"/></svg></span>
          <span><svg viewBox="0 0 22 22"><path d="M0 6l6-2 10 1 5 5-5 5-6-2-5 2-4-2z" fill="#846f61" stroke="#352a33"/><circle cx="15" cy="15" r="5" fill="#174d82"/><path d="M8 8l9 2" stroke="#352a33"/></svg></span>
          <span><svg viewBox="0 0 22 22"><path d="M13 13l8 8" stroke="#0b4774" stroke-width="4"/><circle cx="8" cy="8" r="6.500" fill="#788686" stroke="#17434b" stroke-width="2"/><path d="M5 8h6M8 5v6" stroke="#111" stroke-width="2"/></svg></span>
          <span><svg viewBox="0 0 22 22"><path d="M13 13l8 8" stroke="#0b4774" stroke-width="4"/><circle cx="8" cy="8" r="6.500" fill="#788686" stroke="#17434b" stroke-width="2"/><path d="M5 8h6" stroke="#111" stroke-width="2"/></svg></span>
          <span><svg viewBox="0 0 22 22"><path d="M1 20l7-7h13l-6 7z" fill="#1a6270" stroke="#192f40"/><path d="M11 15V4" stroke="#736c31" stroke-width="2"/><path d="M7 6l4-5 4 5" fill="none" stroke="#342a70" stroke-width="1.500"/></svg></span>
          <span><svg viewBox="0 0 22 22"><path d="M3 3h18v18H3z" fill="#171d36"/><path d="M1 1h17v18H1z" fill="#0b547e" stroke="#101e58" stroke-width="2"/><path d="M10 2h7v8h-7z" fill="#615594"/><path d="M10 1v18M1 10h17" stroke="#101e58" stroke-width="2"/></svg></span>
          <span class="d"><svg viewBox="0 0 22 22"><path d="M1 6l6-5h14v14l-5 6H1z" fill="#286477" stroke="#0d276c" stroke-width="1.500"/><path d="M1 6h15v15M16 6l5-5" fill="none" stroke="#0d276c" stroke-width="1.500"/><path d="M2 7h13v13H2z" fill="#3c758a"/></svg></span>
        </div>
        <svg class="ds" viewBox="0 0 42 36"><path d="M12 8q8-1 9-7M10 9q3-1 5 0" fill="none" stroke="#741e22" stroke-width="2"/><path d="M9 11q9-2 8 4-2 6-13 7L9 12" fill="none" stroke="#27265b" stroke-width="2"/><path d="M28 8q-8 0-8 4 5 3 5 6-2 4-9 4" fill="none" stroke="#77511e" stroke-width="2.600"/><text x="8" y="32" class="ds-c" textLength="33" lengthAdjust="spacingAndGlyphs">CATIA</text></svg>
      </div>
    </div>
  </section>
</div>
</body>
</html>
```
FILE: styles.css
```css
* { box-sizing: border-box; }
body { margin: 0; background: #808080; overflow: hidden; }
.defs { position: absolute; width: 0; height: 0; }
i, b { font-style: normal; font-weight: normal; }
.screen {
  position: relative; width: 1920px; height: 920px; display: flex; flex-direction: column;
  font-family: "Noto Sans", "Noto Sans CJK SC", sans-serif; font-size: 12px; color: #0c0c0c; overflow: hidden; white-space: nowrap;
}
.top-strip { height: 14px; flex: none; background: #808080; }
.bottom-strip { height: 14px; flex: none; background: #7f7f7f; }

/* main window chrome */
.titlebar { position: relative; height: 23px; flex: none; display: flex; align-items: center; background: linear-gradient(#6f8786, #6c7f7b 60%, #6b7b79); border-bottom: 1px solid #3a4243; }
.app-icon { width: 16px; height: 16px; z-index: 1; }
.app-name { margin-left: 5px; font-size: 13px; letter-spacing: -.2px; z-index: 1; }
.glass { position: absolute; inset: 0; overflow: hidden; }
.haze { position: absolute; filter: blur(3px); }
.haze-text { left: 112px; top: 7px; width: 138px; height: 9px; background: #4d6a78; opacity: .6; }
.haze-blue { left: 250px; top: 4px; width: 246px; height: 24px; background: linear-gradient(90deg, #315f83, #3d6e8a 40%, #24598b); }
.haze-dark { left: 253px; top: 7px; width: 32px; height: 8px; background: #173a5c; }
.haze-p1 { left: 514px; top: 11px; width: 9px; height: 10px; background: #63477a; opacity: .8; }
.haze-p2 { left: 763px; top: 11px; width: 9px; height: 10px; background: #63477a; opacity: .8; }
.haze-t1 { left: 540px; top: 12px; width: 175px; height: 9px; background: #4c7280; opacity: .6; }
.haze-t2 { left: 795px; top: 12px; width: 220px; height: 9px; background: #4c7280; opacity: .6; }
.shade { position: absolute; left: 1170px; top: 0; width: 279px; height: 3px; background: linear-gradient(#424e4d, #66767400); }
.win-btns { margin-left: auto; align-self: flex-start; display: flex; height: 19px; border: 1px solid #485452; border-top: 0; border-radius: 0 0 5px 5px; z-index: 1; background: #6e8280; margin-right: 0; }
.wb { width: 28px; display: flex; align-items: center; justify-content: center; border-right: 1px solid #566361; }
.wb svg { width: 13px; height: 12px; }
.wb-close { width: 46px; border-right: 0; }
.menubar { height: 24px; flex: none; display: flex; align-items: center; gap: 16px; padding: 0 0 2px 8px; color: #4b4b4e; background: linear-gradient(#7c7c7c 0, #787879 32%, #686c76 34%, #6e6f78 90%, #5f5f66 96%); }
.toolbar { height: 35px; flex: none; display: flex; background: #767676; border-bottom: 1px solid #686868; }
.tgroup { position: relative; display: flex; align-items: center; gap: 7.2px; padding-left: 13px; border-right: 1px solid #676767; }
.tgroup::before { content: ""; position: absolute; left: 3px; top: 5px; bottom: 4px; width: 2px; background: repeating-linear-gradient(#555 0 2px, #767676 2px 4px); }
.tgroup svg { width: 24px; height: 24px; }
.g1 { width: 105px; }
.g2 { width: 137px; }
.g3 { width: 73px; gap: 7.500px; }
.g4 { width: 105px; padding-left: 15px; gap: 7px; }
.g5 { gap: 1.5px; padding-left: 11px; border: 0; }
.pressed { width: 30px; height: 29px; display: flex; align-items: center; justify-content: center; border: 1.5px solid #2f2f2f; border-radius: 3px; background: #6c6c6c; }

/* work area */
.workspace { height: 810px; flex: none; display: flex; background: #767676; }
.dock { width: 469px; display: flex; flex-direction: column; padding-top: 2px; }
.dock-head { height: 22px; width: 465px; display: flex; align-items: center; gap: 6px; padding: 0 3px 0 4px; background: #6b6b6b; border: 1px solid #616161; border-left: 0; }
.dock-head span { margin-right: auto; }
.hi { width: 10px; height: 10px; }
.dock-body { display: flex; flex: 1; margin-top: 2px; width: 463px; }
.vtabs { width: 26px; display: flex; flex-direction: column; align-items: flex-end; }
.vtab { writing-mode: vertical-rl; text-orientation: sideways; transform: rotate(180deg); width: 22px; height: 45px; display: flex; align-items: center; justify-content: center; border: 1px solid #4f4f4f; background: #6b6b6b; line-height: 20px; }
.vtab.on { width: 25px; height: 64px; background: #7b7b7b; border-left: 0; }
.tabpage { flex: 1; border: 1px solid #4f5257; border-bottom: 0; padding: 2px 4px 0 0; background: #7a7a7a; }
.htab-row { display: flex; height: 25px; }
.htab { width: 59px; border: 1px solid #4f5257; border-bottom: 0; border-left: 0; display: flex; align-items: center; justify-content: center; background: #7f7f7f; }
.htab-rest { flex: 1; border-bottom: 1px solid #4f5257; }
.page { height: 640px; border: 1px solid #5b5d61; border-top: 0; border-left: 0; padding: 11px 10px 0 10px; background: #7c7c7c; }
.tree { height: 620px; display: flex; border: 1px solid #46494e; background: #7f7f7f; }
.tree-main { flex: 1; }
.tree-head { height: 25px; line-height: 26px; padding-left: 4px; background: linear-gradient(#7f7f7f, #787878 55%, #747476); border-bottom: 1px solid #696969; }
.row { height: 19.7px; display: flex; align-items: center; }
.row.alt { background: #797979; }
.r0 { padding-left: 5px; } .r1 { padding-left: 25px; } .r2 { padding-left: 45px; } .r3 { padding-left: 65px; }
.exp { width: 14px; font-size: 8px; text-align: center; color: #181818; font-family: "DejaVu Sans", sans-serif; }
.dim { color: #444; }
.chk { width: 13px; height: 13px; margin: 0 6px 0 4px; border: 1px solid #464c55; background: #777; color: #1c2452; font: bold 12px/11px "DejaVu Sans", sans-serif; text-align: center; }
.pi { width: 15px; height: 15px; margin-right: 7px; }
.row .wide { letter-spacing: .25px; }
.scroll { width: 17px; background: #747474; display: flex; flex-direction: column; align-items: center; }
.up { width: 0; height: 0; margin-top: 8px; border: 3px solid transparent; border-top: 0; border-bottom: 4px solid #303030; }
.thumb { width: 14px; height: 17px; margin-top: 7px; border: 1px solid #505050; border-radius: 2px; background: linear-gradient(90deg, #7d7d7d, #696969); }

.center { width: 1419px; display: flex; flex-direction: column; }
.view3d { width: 1419px; height: 572px; flex: none; display: block; }
.gear-letter { font: bold 38px "Liberation Sans", sans-serif; text-anchor: middle; }
.brand { font: 900 138px Roboto, "Liberation Sans", sans-serif; fill: #040506; stroke: #040506; stroke-width: 4px; }
.brand-sub { font: 500 50px Roboto, sans-serif; fill: #11171b; stroke: #11171b; stroke-width: 1px; }
.bottom { flex: 1; display: flex; gap: 5px; padding-top: 4px; }
.bdock { display: flex; flex-direction: column; }
.bhead { height: 23px; flex: none; display: flex; align-items: center; gap: 6px; padding: 0 3px 0 4px; background: #6d6d6d; border: 1px solid #5f5f5f; }
.bhead span { margin-right: auto; }
.left { width: 767px; }
.left .bhead { padding-right: 1px; }
.right { flex: 1; }
.lpage { flex: 1; margin-top: 27px; border: 1px solid #434343; border-bottom: 0; padding: 19px 11px 0 0; background: #7f7f7f; }
.lgroup { height: 165px; border: 1px solid #727272; border-bottom: 0; display: grid; grid-template-columns: 320px 172px 60px 172px; column-gap: 6.500px; grid-auto-rows: 20px; row-gap: 9px; padding-top: 21px; align-items: center; }
.lab { text-align: right; letter-spacing: .15px; }
.field { display: block; height: 21px; background: #7f7f7f; border: 1px solid #6f6f6f; border-top: 1.500px solid #555; }
.rgroup { position: relative; flex: 1; margin: 21px 9px 0 8px; border: 1px solid #707070; border-bottom: 0; padding: 0 10px 0 11px; display: flex; flex-direction: column; }
.legend { height: 18px; flex: none; }
.legend span { display: inline-block; line-height: 16px; transform: translateY(-9px); background: #767676; }
.listbox { flex: 1; border: 1px solid #434343; border-bottom: 0; background: #7f7f7f; padding: 1px 1px 0; }
.item { height: 20px; line-height: 20px; padding-left: 3px; background: linear-gradient(#7c7c7c, #6f6f6f); letter-spacing: .2px; }

.side { width: 32px; display: flex; flex-direction: column; align-items: center; padding-left: 2px; background: #767676; }
.side svg { width: 24px; height: 24px; margin-bottom: 7.200px; flex: none; }
.grip { width: 26px; height: 2px; margin: 4px 0 7px; background: repeating-linear-gradient(90deg, #5b5b5b 0 2px, #767676 2px 4px); }
.hr { width: 26px; height: 1px; background: #666; margin-bottom: 6px; margin-top: 0; }

/* floating CATIA window */
.catia { position: absolute; left: 0; top: 270px; width: 773px; height: 636px; border: 1px solid #1e2830; border-left: 0; border-bottom: 0; border-radius: 0 7px 0 0; background: linear-gradient(#48606f 0, #3c5261 29%, #24384b 30%, #2b4258 60%, #4c6378 70%); overflow: hidden; display: flex; flex-direction: column; }
.ctitle { position: relative; height: 30px; flex: none; display: flex; justify-content: space-between; background: linear-gradient(90deg, #53697a, #5b7181 420px, #576d7c 462px, #2a4257 472px, #24394b 640px, #2d4455); border-top: 1px solid #6b7d89; }
.ctitle-text { font-size: 13px; line-height: 27px; margin-left: -3px; letter-spacing: -.27px; color: #101010; }
.smudge { left: 165px; top: 3px; width: 42px; height: 5px; background: #42535f; opacity: .7; }
.cbtns { display: flex; height: 20px; margin-right: 5px; border: 1px solid #1d2730; border-top: 0; border-radius: 0 0 4px 4px; overflow: hidden; }
.cbtns span { width: 28px; display: flex; align-items: center; justify-content: center; background: linear-gradient(#445665, #263746 50%, #324555); border-right: 1px solid #1d2730; }
.cbtns svg { width: 13px; height: 12px; }
.cbtns .red { width: 47px; border: 0; background: linear-gradient(#6b4742, #5b241d 45%, #4b130d 55%, #6d2b1f); }
.cframe { width: 766px; flex: 1; display: flex; flex-direction: column; border-top: 1px solid #26303a; border-right: 1px solid #35353c; background: #66646f; }
.cmenu { height: 20px; flex: none; display: flex; align-items: center; gap: 14px; background: #68666f; color: #111; }
.env { margin-left: -23px; width: 65px; text-align: right; display: flex; justify-content: flex-end; }
.mdi { margin-left: auto; display: flex; gap: 2px; padding-right: 1px; }
.mdi i { width: 17px; height: 17px; display: flex; align-items: center; justify-content: center; background: #75797d; border: 1px solid #59616a; }
.mdi svg { width: 10px; height: 10px; }
.ccombos { height: 40px; flex: none; display: flex; align-items: center; padding-bottom: 2px; background: linear-gradient(#7a797d, #6b6973 25%, #66646f 65%, #55535d 88%, #38383b 90%, #4c4c4e); }
.combo { width: 66px; height: 25px; display: flex; justify-content: space-between; border: 2px solid #424247; border-right-color: #77767c; border-bottom-color: #77767c; background: #7f7f7f; margin-right: 5px; padding-left: 3px; overflow: hidden; line-height: 20px; }
.combo b { overflow: hidden; }
.combo i { width: 16px; flex: none; display: flex; align-items: center; justify-content: center; background: #706f76; border-right: 1px solid #333; border-bottom: 1px solid #333; }
.combo i::after { content: ""; border: 4px solid transparent; border-top-color: #0a0a0a; border-bottom: 0; }
.combo.first { width: 66px; border-left: 0; padding-left: 2px; }
.combo.small { width: 42px; }
.combo.small b { width: 19px; }
.combo.off { color: #55555a; background: #6f6e76; margin-right: 4px; }
.combo.off i::after { border-top-color: #4b4b50; }
.combo.none { margin-right: 4px; width: 67px; }
.ci { width: 23px; height: 21px; margin-right: 5px; }
.cbody { height: 506px; flex: none; display: flex; }
.cview { position: relative; width: 731px; height: 506px; overflow: hidden; }
.cview > svg { width: 731px; height: 506px; display: block; }
.axis { font: 14px "Noto Sans", sans-serif; }
.yellow { fill: #736c18; }
.grey { fill: #78777f; }
.tiny { font-size: 10px; }
.ctree { position: absolute; left: -3px; top: 1px; margin: 0; padding: 0; list-style: none; font: 10px "Liberation Serif", serif; color: #8a8a92; }
.ctree li { height: 16.150px; line-height: 16px; }
.ctree b { display: inline-block; line-height: 13px; padding: 0 2px; margin-left: -1px; background: #1b1b38; border-radius: 2px; }
.sel { display: inline-block; width: 7px; height: 11px; background: #1d4e86; }
.cside { width: 34px; border-left: 1px solid #7c7b80; background: linear-gradient(90deg, #6b6973, #65636d 80%, #4f4d58); display: flex; flex-direction: column; }
.cs { border-top: 2px solid #7f7e83; border-image: linear-gradient(90deg, #7f7e83 50%, transparent 50%) 1; position: relative; padding-left: 5px; }
.lone { height: 48.500px; padding-top: 12px; }
.lone:first-child { margin-top: 2px; }
.cside svg { width: 22px; height: 22px; display: block; }
.drop::after { content: ""; position: absolute; right: 2px; top: 34px; border: 4px solid transparent; border-top-color: #0a0a0a; border-bottom: 0; }
.stack { height: 309px; padding-top: 10px; display: flex; flex-direction: column; gap: 7.100px; }
.stack svg { flex: none; }
.cgrip { width: 16px; height: 2px; background: #7f7e83; }
.more { align-self: flex-end; margin: 26px 6px 0 0; color: #77767c; line-height: 14px; }
.cbottom { position: relative; height: 35px; flex: none; display: flex; border-top: 1px solid #7f7e83; border-bottom: 2px solid #3a3a42; background: linear-gradient(#6c6b74, #62606b 75%, #514f59); }
.cb { display: flex; flex: none; }
.cb span { position: relative; height: 32px; display: flex; align-items: center; justify-content: center; }
.cb svg { width: 21px; height: 21px; }
.b1 { margin-left: -22px; }
.b1 span { width: 28.650px; }
.b2 { margin-left: 6px; }
.b2 span { width: 27.900px; }
.b3 { margin-left: 7px; }
.b3 span { width: 28.100px; }
.gray svg { fill: none; stroke: #4d4c54; stroke-width: 1.400; filter: drop-shadow(1px 1px 0 #7f7e86); }
.d::after { content: ""; position: absolute; right: -2px; bottom: 0; border: 4px solid transparent; border-top-color: #0a0a0a; border-bottom: 0; }
.vsep { width: 2px; flex: none; height: 16px; margin: 3px 0 0 10px; background: #7f7e83; }
.b1 + .vsep { margin-left: 10.500px; }
.b2 + .vsep { margin-left: 9px; }
.fx { font: italic 22px "Liberation Serif", serif; color: #0d0d0d; }
.fx small { font-size: 13px; font-weight: bold; margin-top: 6px; }
.qm { font: bold 20px "Liberation Sans", sans-serif; fill: #111a52; }
.ds { width: 42px; height: 36px; flex: none; margin: -3px 7px 0 auto; }
.ds-c { font: italic bold 10px "Liberation Sans", sans-serif; fill: #27265b; }
```
